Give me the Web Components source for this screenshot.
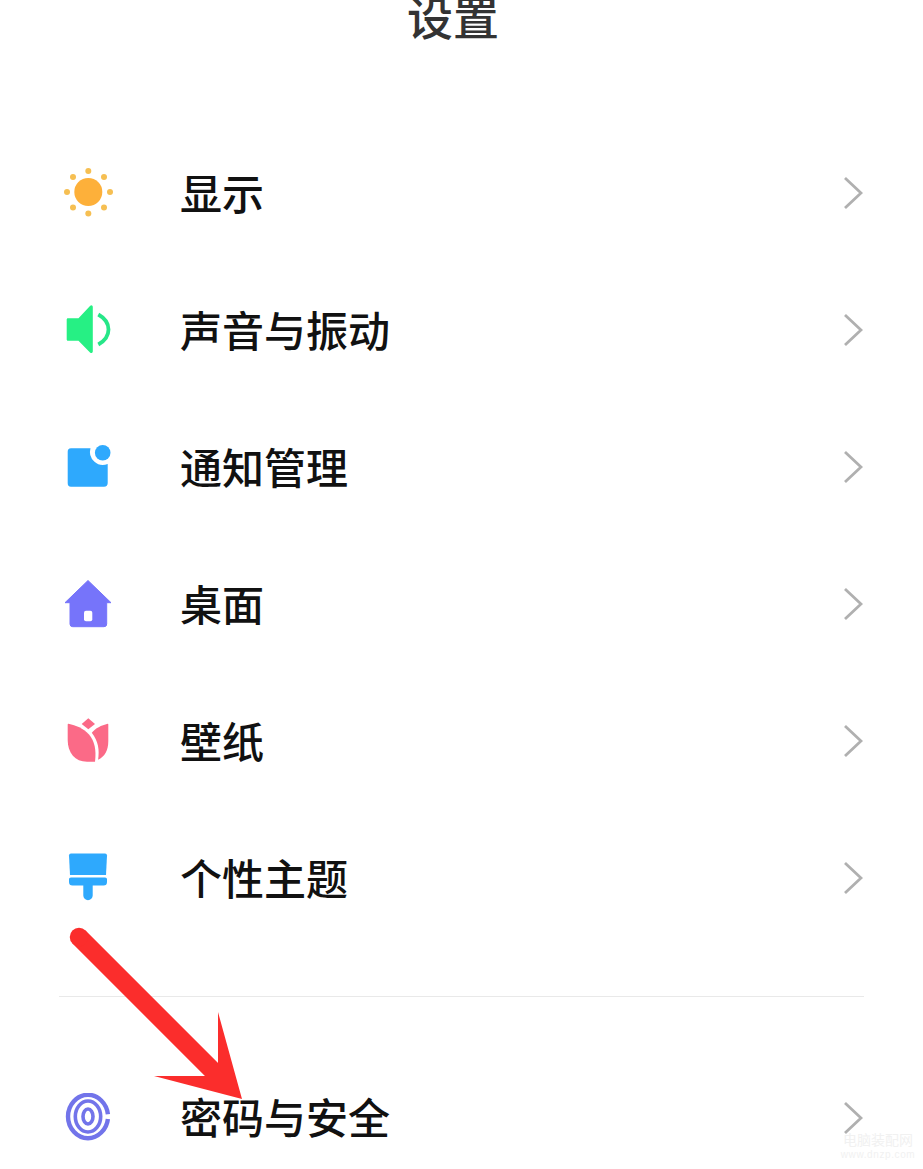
<!DOCTYPE html>
<html lang="zh"><head><meta charset="utf-8"><title>设置</title>
<style>html,body{margin:0;padding:0;background:#fff}body{font-family:"Noto Sans CJK SC","Liberation Sans",sans-serif}</style>
</head><body>
<settings-screen>
  <settings-title>设置</settings-title>
  <settings-row label="显示"><svg viewBox="0 0 50 50" width="50" height="50"><circle cx="25.300" cy="24" r="14" fill="#fdb03a"/><g fill="#f6bf52"><circle cx="25.300" cy="3" r="3"/><circle cx="25.300" cy="45.500" r="3"/><circle cx="4" cy="24" r="3"/><circle cx="47" cy="24" r="3"/><circle cx="10" cy="9" r="3"/><circle cx="41" cy="9" r="3"/><circle cx="10" cy="39.500" r="3"/><circle cx="41" cy="39.500" r="3"/></g></svg></settings-row>
  <settings-row label="声音与振动"><svg viewBox="0 0 50 50" width="50" height="50"><path d="M3.700 14.500c0-.8.600-1.300 1.300-1.300h10.500L27 1c1.300-1.300 2.800-.6 2.800 1.200v44c0 1.800-1.500 2.500-2.800 1.200L15.500 35.800H5c-.7 0-1.300-.5-1.300-1.300z" fill="#26f084"/><path d="M35.300 9.500C42.500 13.500 45.500 19 45.500 24.500s-3 11-10.200 15" fill="none" stroke="#26e688" stroke-width="3.800"/></svg></settings-row>
  <settings-row label="通知管理"><svg viewBox="0 0 50 50" width="50" height="50"><path d="M8 6.300h19.500A13 13 0 0 0 44.700 22v19a3.700 3.700 0 0 1-3.700 3.700H8A3.500 3.500 0 0 1 4.700 41V10A3.500 3.500 0 0 1 8 6.300z" fill="#2ea9fd"/><circle cx="39.700" cy="10.700" r="7.800" fill="#2ea9fd"/></svg></settings-row>
  <settings-row label="桌面"><svg viewBox="0 0 50 50" width="50" height="50"><path d="M25 1.500 48 23.700H43.700V45a2.700 2.700 0 0 1-2.700 2.700H9.700A2.700 2.700 0 0 1 7 45V23.700H2z" fill="#7674fa" stroke="#7674fa" stroke-linejoin="round" stroke-width="1"/><rect x="21" y="31.700" width="8.300" height="10.500" rx="2" fill="#fff"/></svg></settings-row>
  <settings-row label="壁纸"><svg viewBox="0 0 50 50" width="50" height="50"><path d="M25.300 2.300 32 8 25.300 13.300 18.700 8z" fill="#fb6a87"/><path d="M5.500 7.800C13 9.500 20 12 26 18.500c5.500 6 7.500 15.500 6 27.200H24C12 45.700 4.700 37 4.700 24V8.500c0-.5.300-.8.800-.7z" fill="#fb6a87"/><path d="M44.800 7.800c.3 0 .5.300.5.700V25c0 9.500-3.500 15.500-10.200 18.800 1.500-9.800.3-18.500-6.300-27 3.500-4.500 9.500-7.500 16-9z" fill="#fb6a87"/></svg></settings-row>
  <settings-row label="个性主题"><svg viewBox="0 0 50 50" width="50" height="50"><path d="M8 .5h34a2 2 0 0 1 2 2L43 22H7L6 2.500a2 2 0 0 1 2-2z" fill="#2ea9fd"/><path d="M8 24.500h34c1.300 0 2 .7 2 2V29a3.500 3.500 0 0 1-3.500 3.500h-10.800V42.500a4.700 4.700 0 0 1-9.400 0V32.500H9.500A3.500 3.500 0 0 1 6 29V26.500c0-1.300.7-2 2-2z" fill="#2ea9fd"/></svg></settings-row>
  <settings-divider></settings-divider>
  <settings-row label="密码与安全"><svg viewBox="0 0 50 50" width="50" height="50" fill="none" stroke="#7274ea"><path d="M44.900 21.200C43.700 10.500 35 1.800 25 1.800 14 1.800 5 11.800 5 23.500S14 45.200 25 45.200c10 0 18.700-8.700 19.900-19.300" stroke-width="4.400"/><ellipse cx="25" cy="23.500" rx="12.700" ry="15.500" stroke-width="3.600"/><ellipse cx="25" cy="23.500" rx="5" ry="7.500" stroke-width="3.600"/></svg></settings-row>
  <red-arrow></red-arrow>
  <site-watermark></site-watermark>
</settings-screen>
<script>
function def(name, html, init){
  customElements.define(name, class extends HTMLElement{
    constructor(){super();this.attachShadow({mode:'open'}).innerHTML=html;}
    connectedCallback(){ if(init) init(this); }
  });
}
def('settings-screen',`<style>:host{display:flex;flex-direction:column;position:relative;width:923px;height:1169px;overflow:hidden;background:#fff;color:#111}</style><slot></slot>`);
def('settings-title',`<style>:host{display:flex;flex:none;justify-content:center;align-items:flex-end;height:40px;margin-bottom:84.5px;overflow:hidden;font-size:46px;line-height:60px;font-weight:500;color:#333;padding-right:17px}
span{display:block;margin-bottom:-5px}</style><span><slot></slot></span>`);
def('settings-row',`<style>:host{display:flex;align-items:center;height:137px;padding:0 60px 0 63px;box-sizing:border-box;flex:none}
.i{width:50px;height:50px;flex:none;display:flex}.t{margin-left:67px;margin-bottom:3px;flex:1;font-size:42px;line-height:56px;font-weight:500;color:#111}
svg{display:block}</style><span class="i"><slot></slot></span><span class="t"></span><svg width="20" height="34" viewBox="0 0 20 34"><path d="M2 2 18 17 2 32" fill="none" stroke="#b0b0b0" stroke-width="2.800"/></svg>`,
 el=>{el.shadowRoot.querySelector('.t').textContent=el.getAttribute('label');});
def('settings-divider',`<style>:host{display:block;flex:none;height:1px;background:#e9e9e9;margin:49.5px 59px 52px}</style>`);
def('red-arrow',`<style>:host{position:absolute;left:60px;top:920px;display:block;width:200px;height:190px}svg{display:block}</style>
<svg width="200" height="190" viewBox="60 920 200 190"><path d="M79 937 222 1080" stroke="#fb2d2c" stroke-width="18.500" fill="none"/><circle cx="79" cy="937" r="9.250" fill="#fb2d2c"/><path d="M218 1012 242 1099 154 1076 206 1076 218 1064z" fill="#fb2d2c"/></svg>`);
def('site-watermark',`<style>:host{position:absolute;left:843px;top:1130px;display:flex;flex-direction:column;align-items:center;width:70px;color:#f1f1f1}
.a{font-size:14px;line-height:18px;white-space:nowrap}.b{font-family:"Liberation Sans",sans-serif;font-size:10px;line-height:14px;white-space:nowrap;letter-spacing:.6px}</style><span class="a">电脑装配网</span><span class="b">www.dnzp.com</span>`);
</script>
</body></html>
